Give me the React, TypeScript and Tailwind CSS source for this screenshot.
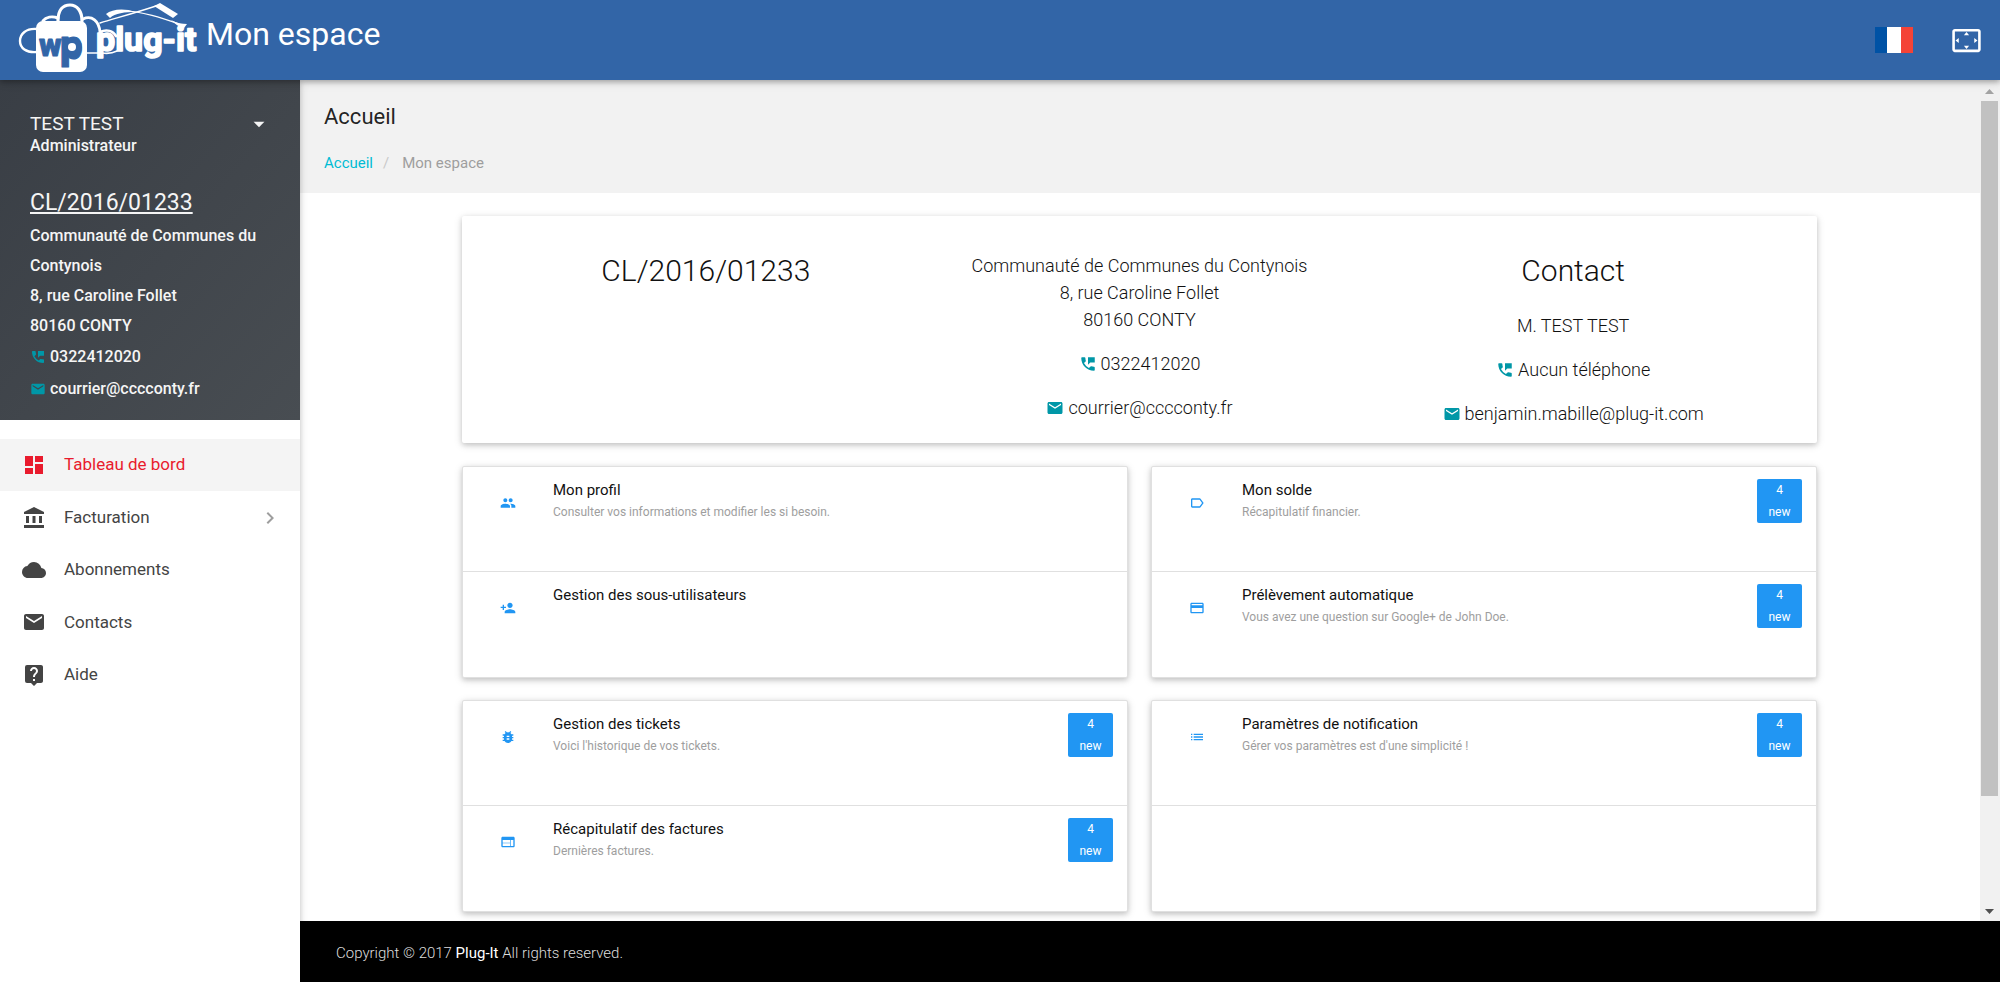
import React from "react";
import {
  MdAccountBalance,
  MdArrowDropDown,
  MdBugReport,
  MdChevronRight,
  MdCloud,
  MdCreditCard,
  MdDashboard,
  MdEmail,
  MdLabelOutline,
  MdList,
  MdLiveHelp,
  MdPeople,
  MdPermPhoneMsg,
  MdPersonAdd,
  MdSettingsOverscan,
  MdWeb,
} from "react-icons/md";
import type { IconType } from "react-icons";

const CARD_SHADOW =
  "shadow-[0_2px_5px_0_rgba(0,0,0,0.16),0_2px_10px_0_rgba(0,0,0,0.12)]";

function Logo() {
  return (
    <svg
      viewBox="0 0 184 72"
      className="h-[72px] w-[184px] shrink-0"
      role="img"
      aria-label="wp plug-it"
    >
      <g fill="none" stroke="#fff" strokeLinecap="round">
        <path d="M19 27C8 26 2 32 2 39C2 46 8 51 19 50" strokeWidth="2.400" />
        <path d="M25 19C28 15 34 14 40 16" strokeWidth="3" />
        <path d="M40 19C40 8 45 3 52 3C59 3 64 9 64 19" strokeWidth="3.200" />
        <path d="M65 17C74 13 81 19 82 30C89 27 95 29 98 34" strokeWidth="2.800" />
        <path d="M68 51H84C91 52 95 51 99 49" strokeWidth="1.600" />
        <path d="M82 21C102 15 120 10 138 4" strokeWidth="1.400" />
        <path d="M104 9C124 9 144 16 164 23" strokeWidth="1.200" />
      </g>
      <g fill="#fff">
        <path d="M88 12C94 7 106 6 118 10C107 10 97 11 92 16Z" />
        <path d="M136 4L142 1L160 12L155 16Z" />
        <path d="M153 18C159 21 164 22 169 22L166 26C161 25 157 22 153 18Z" />
        <rect x="18" y="19" width="51" height="51" rx="7" />
      </g>
      <g fontFamily="Roboto, sans-serif" strokeLinejoin="round">
        <g fontWeight="900" fill="#3265a7" stroke="#3265a7" strokeWidth="1">
          <text x="21" y="54" fontSize="31">
            w
          </text>
          <text x="42" y="57" fontSize="40">
            p
          </text>
        </g>
        <circle cx="54" cy="45" r="10" fill="#3265a7" />
        <circle cx="54" cy="45" r="4" fill="#fff" />
        <text
          x="78"
          y="49"
          fontSize="34"
          fontWeight="700"
          fill="#fff"
          stroke="#fff"
          strokeWidth="1.600"
        >
          plug-it
        </text>
      </g>
    </svg>
  );
}

function Flag() {
  return (
    <svg viewBox="0 0 38 26" className="h-[26px] w-[38px]" aria-hidden="true">
      <rect width="12" height="26" fill="#0052a5" />
      <rect x="12" width="14" height="26" fill="#fff" />
      <rect x="26" width="12" height="26" fill="#f44336" />
    </svg>
  );
}

function Header() {
  return (
    <header className="relative z-20 flex h-20 shrink-0 items-center justify-between bg-[#3265a7] px-[18px] text-white shadow-[0_2px_5px_0_rgba(0,0,0,0.26),0_2px_10px_0_rgba(0,0,0,0.12)]">
      <a href="#" className="flex h-full items-start gap-[4px] pt-[2px]">
        <Logo />
        <span className="text-[32px] leading-[64px]">Mon espace</span>
      </a>
      <div className="flex items-center gap-[38px]">
        <button type="button" aria-label="Langue">
          <Flag />
        </button>
        <button type="button" aria-label="Plein écran">
          <MdSettingsOverscan size={31} />
        </button>
      </div>
    </header>
  );
}

const NAV: { icon: IconType; label: string; active?: boolean; more?: boolean }[] = [
  { icon: MdDashboard, label: "Tableau de bord", active: true },
  { icon: MdAccountBalance, label: "Facturation", more: true },
  { icon: MdCloud, label: "Abonnements" },
  { icon: MdEmail, label: "Contacts" },
  { icon: MdLiveHelp, label: "Aide" },
];

function Sidebar() {
  return (
    <aside className="relative z-10 w-[300px] shrink-0 bg-white shadow-[0_2px_5px_0_rgba(0,0,0,0.16),0_2px_10px_0_rgba(0,0,0,0.12)]">
      <div className="h-[340px] bg-linear-to-br from-[#393e45] to-[#484d52] px-[30px] pt-8 font-medium text-[#f5f5f5]">
        <button
          type="button"
          className="flex h-6 w-full items-center justify-between text-left text-[19px] leading-6 font-normal"
        >
          TEST TEST
          <MdArrowDropDown size={26} className="-mr-0.5" />
        </button>
        <p className="text-[16px] leading-[20px]">Administrateur</p>
        <p className="mt-8 text-[23px] leading-[30px] font-normal underline underline-offset-2">
          CL/2016/01233
        </p>
        <p className="mt-[3px] text-[16px] leading-[30px]">
          Communauté de Communes du Contynois
          <br />
          8, rue Caroline Follet
          <br />
          80160 CONTY
        </p>
        <p className="flex items-center gap-1 text-[16px] leading-8">
          <MdPermPhoneMsg size={16} className="text-[#0097a7]" />
          0322412020
        </p>
        <p className="flex items-center gap-1 text-[16px] leading-8">
          <MdEmail size={16} className="text-[#0097a7]" />
          courrier@cccconty.fr
        </p>
      </div>
      <nav className="mt-[19px] grid h-[262px] auto-rows-fr">
        {NAV.map(({ icon: Icon, label, active, more }) => (
          <a
            key={label}
            href="#"
            className={
              active
                ? "flex items-center bg-[#f4f4f4] px-[22px] text-[17px] text-[#e91b2d]"
                : "flex items-center px-[22px] text-[17px] text-[#444444]"
            }
          >
            <Icon size={24} />
            <span className="ml-[18px] flex-1">{label}</span>
            {more && <MdChevronRight size={24} className="-mr-1 text-[#9e9e9e]" />}
          </a>
        ))}
      </nav>
    </aside>
  );
}

function IconLine({ icon: Icon, text }: { icon: IconType; text: string }) {
  return (
    <p className="mt-[17px] flex items-center justify-center gap-1">
      <Icon size={18} className="text-[#0097a7]" />
      {text}
    </p>
  );
}

function Summary() {
  return (
    <section
      className={`grid h-[227px] grid-cols-3 rounded-[2px] bg-white px-[27px] pt-9 text-center text-[18px] leading-[27px] font-light text-[#111111] ${CARD_SHADOW}`}
    >
      <h2 className="text-[30px] leading-[38px]">CL/2016/01233</h2>
      <div>
        <p>
          Communauté de Communes du Contynois
          <br />
          8, rue Caroline Follet
          <br />
          80160 CONTY
        </p>
        <IconLine icon={MdPermPhoneMsg} text="0322412020" />
        <IconLine icon={MdEmail} text="courrier@cccconty.fr" />
      </div>
      <div>
        <h2 className="text-[30px] leading-[38px]">Contact</h2>
        <p className="mt-[22px]">M. TEST TEST</p>
        <IconLine icon={MdPermPhoneMsg} text="Aucun téléphone" />
        <IconLine icon={MdEmail} text="benjamin.mabille@plug-it.com" />
      </div>
    </section>
  );
}

type Entry = { icon?: IconType; title?: string; text?: string; badge?: boolean };

const CARDS: Entry[][] = [
  [
    {
      icon: MdPeople,
      title: "Mon profil",
      text: "Consulter vos informations et modifier les si besoin.",
    },
    { icon: MdPersonAdd, title: "Gestion des sous-utilisateurs" },
  ],
  [
    { icon: MdLabelOutline, title: "Mon solde", text: "Récapitulatif financier.", badge: true },
    {
      icon: MdCreditCard,
      title: "Prélèvement automatique",
      text: "Vous avez une question sur Google+ de John Doe.",
      badge: true,
    },
  ],
  [
    {
      icon: MdBugReport,
      title: "Gestion des tickets",
      text: "Voici l'historique de vos tickets.",
      badge: true,
    },
    { icon: MdWeb, title: "Récapitulatif des factures", text: "Dernières factures.", badge: true },
  ],
  [
    {
      icon: MdList,
      title: "Paramètres de notification",
      text: "Gérer vos paramètres est d'une simplicité !",
      badge: true,
    },
    {},
  ],
];

function Collection({ entries }: { entries: Entry[] }) {
  return (
    <ul
      className={`h-[212px] divide-y divide-[#e0e0e0] rounded-[2px] border border-[#e0e0e0] bg-white ${CARD_SHADOW}`}
    >
      {entries.map(({ icon: Icon, title, text, badge }, i) => (
        <li key={i} className="flex h-[105px] items-start pt-3 pr-[14px] pl-[37px]">
          {Icon && <Icon size={16} className="mt-4 text-[#2196f3]" />}
          <div className="ml-[37px] flex-1">
            {title && <h3 className="text-[15px] leading-[22px] text-[#111111]">{title}</h3>}
            {text && <p className="text-[12px] leading-[22px] text-[#9e9e9e]">{text}</p>}
          </div>
          {badge && (
            <span className="flex w-[45px] flex-col rounded-[2px] bg-[#2196f3] text-center text-[12px] leading-[22px] text-white">
              <span>4</span>
              <span>new</span>
            </span>
          )}
        </li>
      ))}
    </ul>
  );
}

function ScrollTrack() {
  return (
    <div className="flex w-5 shrink-0 flex-col items-center bg-[#f1f1f1]" aria-hidden="true">
      <svg viewBox="0 0 20 21" className="h-[21px] w-5">
        <path d="M5 14H14L9.500 9Z" fill="#a3a3a3" />
      </svg>
      <div className="min-h-0 w-full flex-1 px-px">
        <div className="h-[87%] w-[17px] bg-[#c1c1c1]" />
      </div>
      <svg viewBox="0 0 20 21" className="h-[21px] w-5">
        <path d="M5 9H14L9.500 14Z" fill="#505050" />
      </svg>
    </div>
  );
}

export default function App() {
  return (
    <div className="flex h-screen flex-col overflow-hidden bg-white font-[Roboto,sans-serif] text-black/87">
      <Header />
      <div className="flex min-h-0 flex-1">
        <Sidebar />
        <div className="flex min-w-0 flex-1 flex-col">
          <div className="flex min-h-0 flex-1">
            <main className="min-w-0 flex-1 overflow-y-auto [scrollbar-width:none]">
              <div className="h-[113px] bg-[#f2f2f2] px-6 pt-[21px]">
                <h1 className="text-[22px] leading-8 font-normal">Accueil</h1>
                <nav className="mt-[19px] flex text-[15px] leading-[22px]" aria-label="Fil d'Ariane">
                  <a href="#" className="text-[#00bcd4]">
                    Accueil
                  </a>
                  <span className="mr-[13px] ml-[10px] text-[#c9c9c9]">/</span>
                  <span className="text-[#9e9e9e]">Mon espace</span>
                </nav>
              </div>
              <div className="mx-auto w-[85%] pt-[23px] pr-[37px] pl-9">
                <Summary />
                <div className="mt-[23px] grid grid-cols-2 gap-x-[23px] gap-y-[22px]">
                  {CARDS.map((entries, i) => (
                    <Collection key={i} entries={entries} />
                  ))}
                </div>
              </div>
            </main>
            <ScrollTrack />
          </div>
          <footer className="flex h-[61px] shrink-0 items-center bg-black px-9 pt-1 text-[15px] font-light text-[#dddddd]">
            <p>
              Copyright © 2017{" "}
              <a href="#" className="font-normal text-white">
                Plug-It
              </a>{" "}
              All rights reserved.
            </p>
          </footer>
        </div>
      </div>
    </div>
  );
}
